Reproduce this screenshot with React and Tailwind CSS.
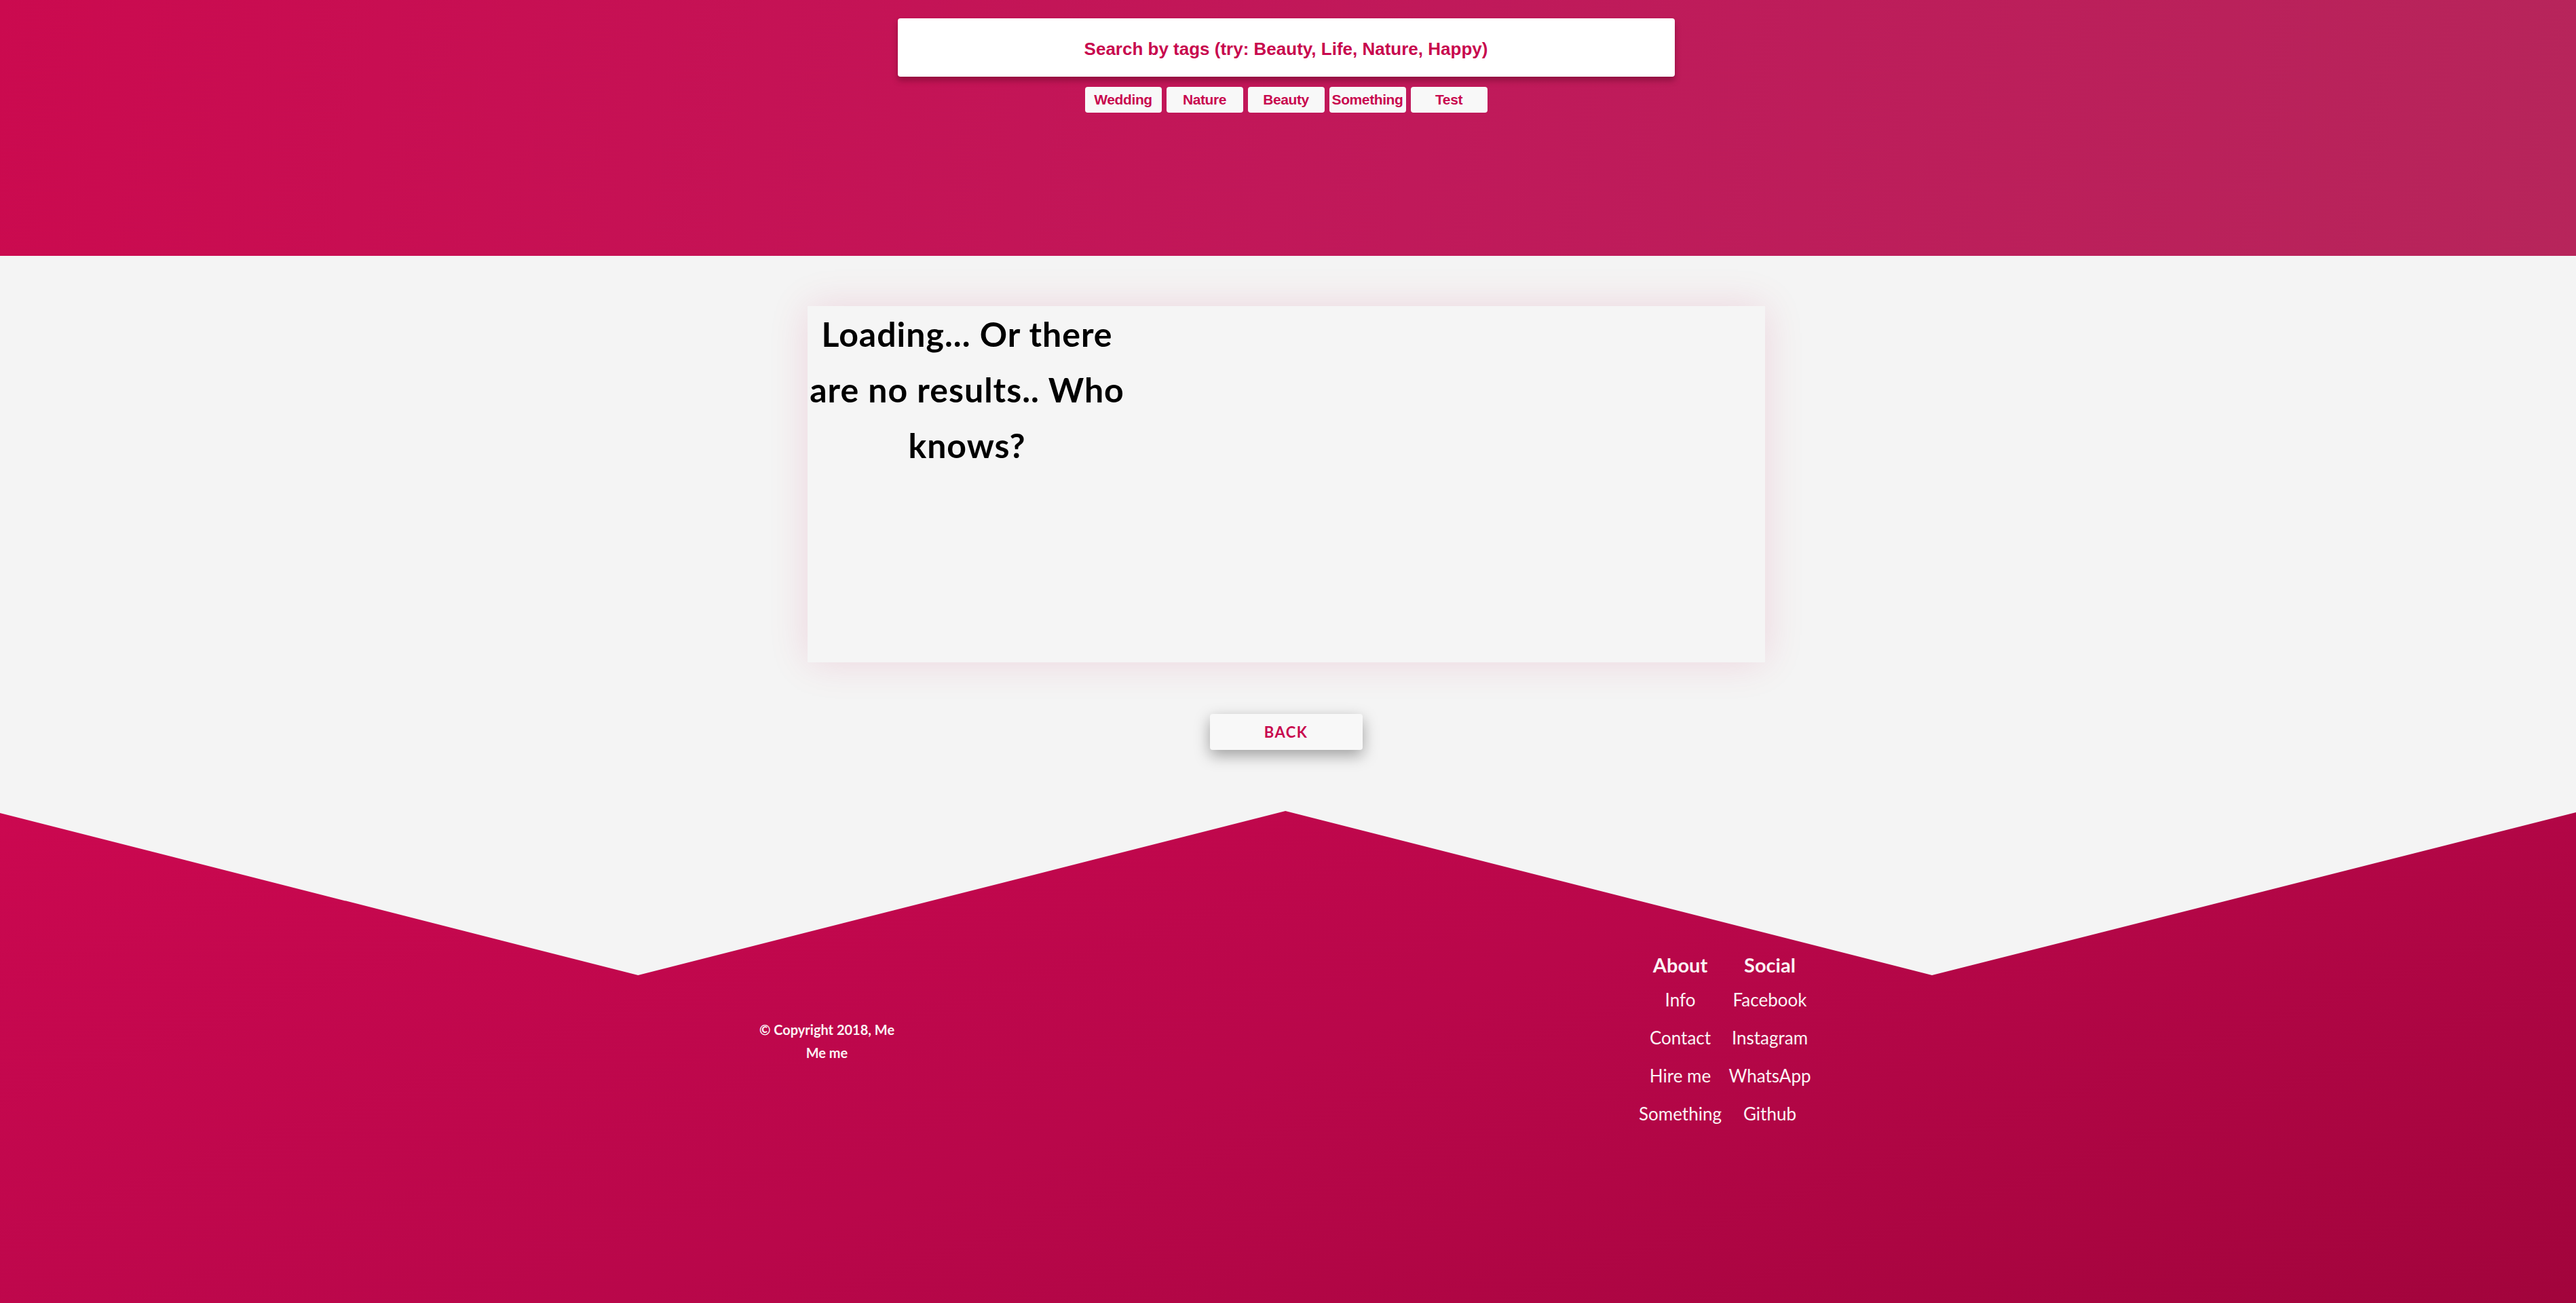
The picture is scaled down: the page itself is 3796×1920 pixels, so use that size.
const tags = ['Wedding', 'Nature', 'Beauty', 'Something', 'Test'];
const about = ['Info', 'Contact', 'Hire me', 'Something'];
const social = ['Facebook', 'Instagram', 'WhatsApp', 'Github'];

const Header = () => {
    return (
        <header className="h-[377px] pt-[27px] pr-[6px] bg-[linear-gradient(100deg,#cb0a4f_0%,#c0195a_55%,#b7255b_100%)] flex flex-col items-center">
            <input
                type="text"
                placeholder="Search by tags (try: Beauty, Life, Nature, Happy)"
                className="w-[1145px] h-[86px] pt-[4px] rounded-[4px] bg-white text-center text-[26px] font-bold text-[#c8084e] placeholder:text-[#c8084e] shadow-[0_6px_9px_rgba(60,0,20,0.35)] outline-none font-['Liberation_Sans',Arial,sans-serif]"
            />
            <div className="flex gap-[7px] mt-[15px]">
                {tags.map(tag => (
                    <button key={tag} className="w-[113px] h-[38px] rounded-[4px] bg-[#f8f8f8] text-[#c8084e] text-[21px] font-bold font-['Liberation_Sans',Arial,sans-serif] tracking-[-0.4px]">
                        {tag}
                    </button>
                ))}
            </div>
        </header>
    )
}

const Footer = () => {
    return (
        <footer className="mt-[90px] h-[725px] pt-[204px] bg-[linear-gradient(160deg,#cb0850_0%,#b9074a_50%,#a2043c_100%)] [clip-path:polygon(0_3px,24.77%_242px,49.9%_0,75%_242px,100%_2px,100%_100%,0_100%)] text-[#fbf2f5] font-['Lato','Open_Sans',sans-serif]">
            <div className="w-[1564px] mx-auto flex justify-between items-center">
                <div className="w-[205px] text-center text-[20px] leading-[34px] font-bold">
                    <div className="whitespace-nowrap">© Copyright 2018, Me</div>
                    <div>Me me</div>
                </div>
                <div className="flex pr-[6px]">
                    <div className="w-[132px] flex flex-col items-center">
                        <div className="text-[29px] leading-[46px] font-bold">About</div>
                        {about.map(link => (
                            <a key={link} className="text-[26px] leading-[56px] whitespace-nowrap">{link}</a>
                        ))}
                    </div>
                    <div className="w-[132px] flex flex-col items-center">
                        <div className="text-[29px] leading-[46px] font-bold">Social</div>
                        {social.map(link => (
                            <a key={link} className="text-[26px] leading-[56px] whitespace-nowrap">{link}</a>
                        ))}
                    </div>
                </div>
            </div>
        </footer>
    )
}

const App = () => {
    return (
        <div className="min-h-[1920px] bg-[#f4f4f4] overflow-hidden">
            <Header />
            <main className="flex flex-col items-center pr-[6px]">
                <div className="mt-[74px] w-[1411px] h-[525px] bg-[#f5f5f5] shadow-[0_0_55px_rgba(200,8,78,0.13)]">
                    <div className="w-[471px] text-center text-[50px] leading-[82px] font-bold tracking-[1px] text-black font-['Lato','Open_Sans',sans-serif]">
                        Loading... Or there<br />are no results.. Who<br />knows?
                    </div>
                </div>
                <button className="mt-[76px] w-[225px] h-[53px] rounded-[4px] bg-[#f8f8f8] text-[#c8084e] text-[22px] font-bold tracking-[1.5px] shadow-[0_8px_22px_rgba(0,0,0,0.35)] font-['Lato','Open_Sans',sans-serif]">
                    BACK
                </button>
            </main>
            <Footer />
        </div>
    )
}

export default App;
